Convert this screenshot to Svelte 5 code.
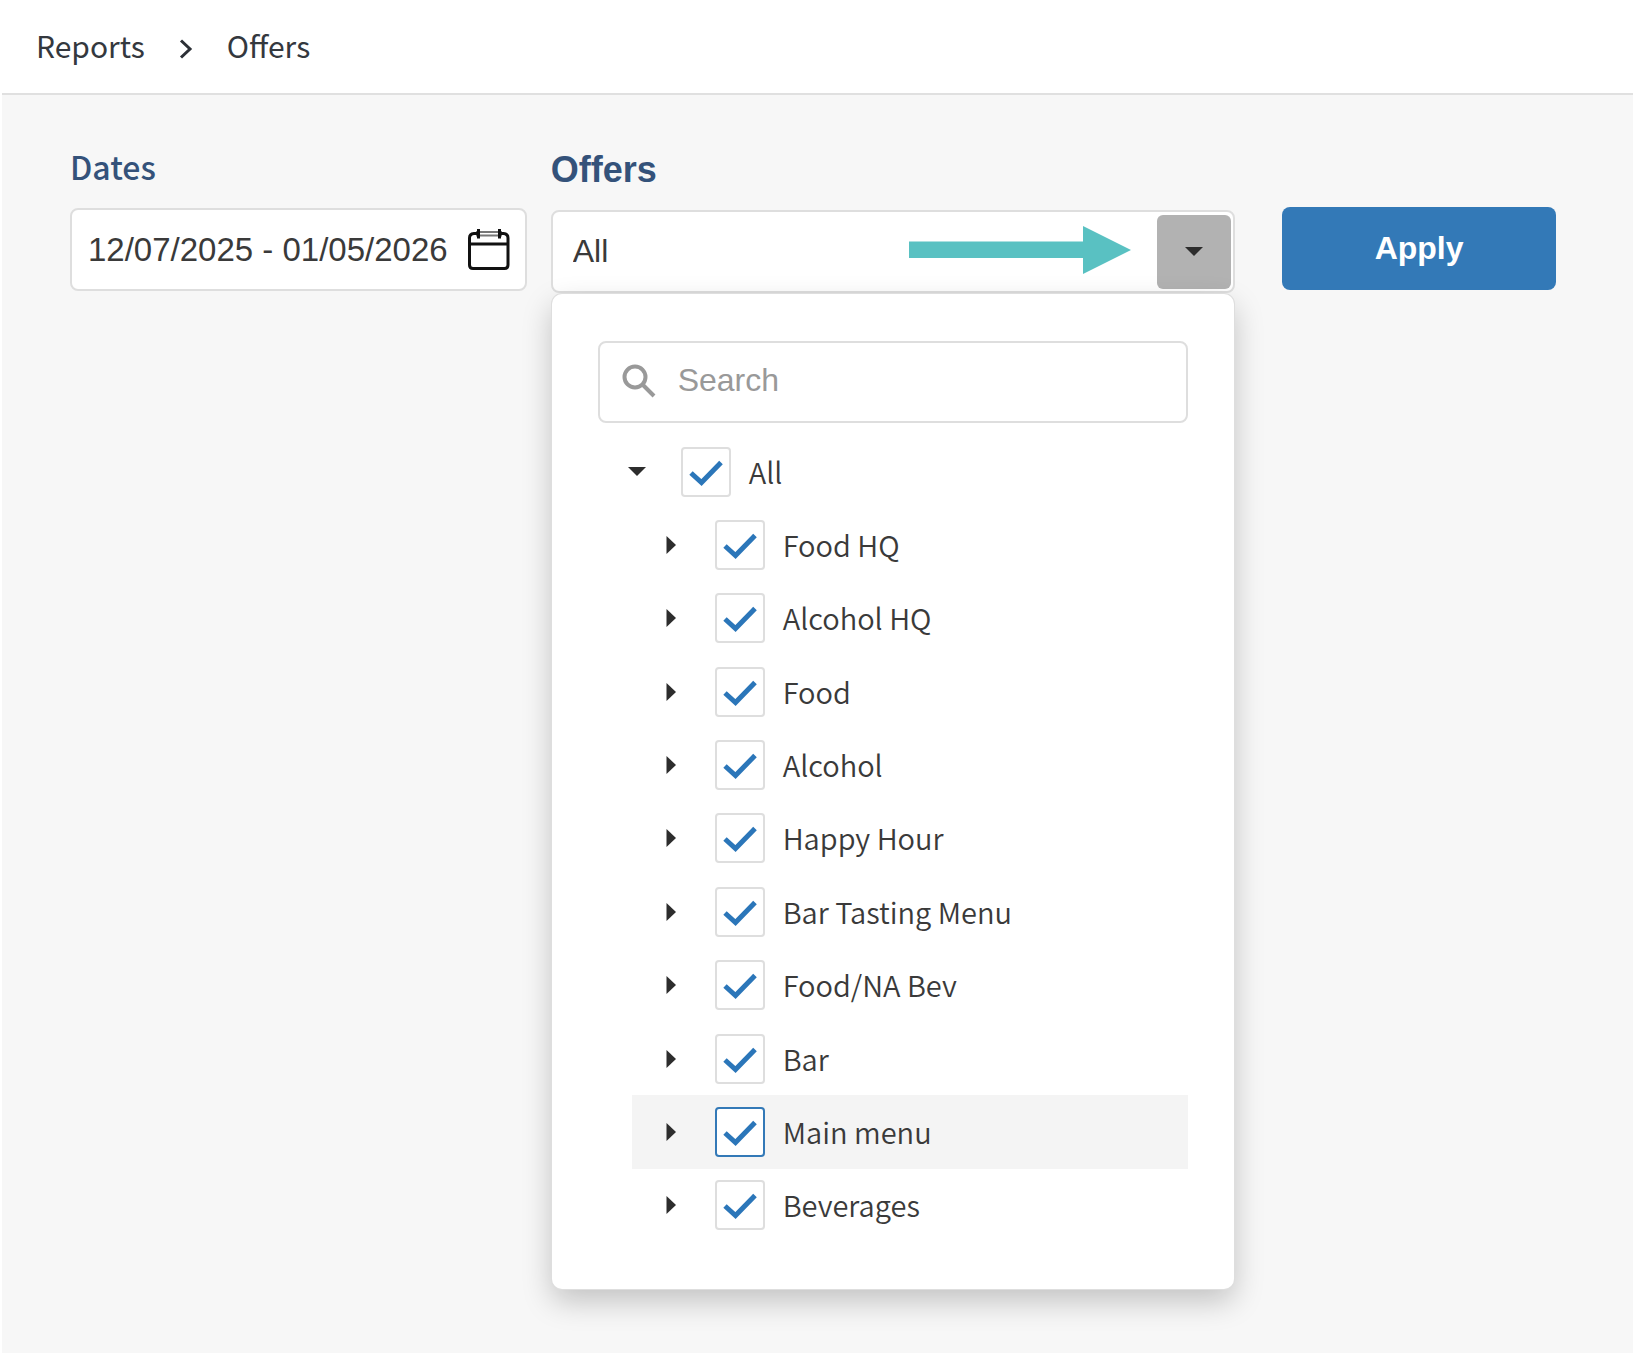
<script>
  const names = [
    'Food HQ',
    'Alcohol HQ',
    'Food',
    'Alcohol',
    'Happy Hour',
    'Bar Tasting Menu',
    'Food/NA Bev',
    'Bar',
    'Main menu',
    'Beverages',
  ];
  let items = $state([
    { name: 'All', root: true, checked: true, active: false },
    ...names.map((name) => ({ name, root: false, checked: true, active: name === 'Main menu' })),
  ]);
  let dates = $state('12/07/2025 - 01/05/2026');
  let selected = $state('All');
  let query = $state('');
</script>

<div class="page">
  <header>
    <nav aria-label="Breadcrumb">
      <a href="#reports">Reports</a>
      <svg class="chevron" viewBox="0 0 14 20" aria-hidden="true">
        <path d="M2 1.5 L11 10 L2 18.500" />
      </svg>
      <a href="#offers" aria-current="page">Offers</a>
    </nav>
  </header>

  <main>
    <form class="filters" onsubmit={(e) => e.preventDefault()}>
      <div class="col">
        <label class="title source" for="dates">Dates</label>
        <div class="field">
          <input id="dates" class="dates" type="text" bind:value={dates} />
          <button class="calendar" type="button" aria-label="Open calendar">
            <svg viewBox="0 0 42 42" aria-hidden="true">
              <path class="band" d="M8 3 H34 M8 6.500 H34" />
              <path d="M9 4.500 H6 Q1.500 5 1.500 9 V36 Q1.500 39.500 5 39.500 H36.500 Q40 39.500 40 36 V9 Q40 5 35.500 4.500 H33" />
              <path d="M1.500 15 H40" />
              <path d="M10.500 0 V9.500 M31.500 0 V9.500" />
            </svg>
          </button>
        </div>
      </div>

      <div class="col">
        <label class="title" for="offers">Offers</label>
        <div class="field select">
          <input id="offers" class="value" type="text" role="combobox" aria-expanded="true" aria-controls="offer-panel" readonly bind:value={selected} />
          <svg class="arrow" viewBox="0 0 222 48" aria-hidden="true">
            <path d="M0 15.500 H174 V0 L222 24 L174 48 V32 H0 Z" />
          </svg>
          <button class="toggle" type="button" aria-label="Toggle offers">
            <svg class="caret" viewBox="0 0 18 18" aria-hidden="true"><path d="M0 4 H18 L9 13 Z" /></svg>
          </button>
        </div>

        <div class="panel" id="offer-panel">
          <div class="search">
            <svg viewBox="0 0 34 34" aria-hidden="true">
              <circle cx="13" cy="13" r="10.500" />
              <path d="M20 20 L32 32" />
            </svg>
            <input type="text" placeholder="Search" aria-label="Search" bind:value={query} />
          </div>
          <ul>
            {#each items as item, i}
              <li class:child={!item.root} class:active={item.active}>
                <button class="expander" type="button" aria-label={`Expand ${item.name}`}>
                  <svg class="caret" viewBox="0 0 18 18" aria-hidden="true">
                    <path d={item.root ? 'M0 4 H18 L9 13 Z' : 'M4.500 0 L14 9 L4.500 18 Z'} />
                  </svg>
                </button>
                <span class="tick">
                  <input type="checkbox" id={`offer-${i}`} bind:checked={item.checked} />
                  <svg viewBox="0 0 50 50" aria-hidden="true"><path d="M10 26 L20.500 35.500 L40 15.500" /></svg>
                </span>
                <label for={`offer-${i}`}>{item.name}</label>
              </li>
            {/each}
          </ul>
        </div>
      </div>

      <button class="apply" type="submit">Apply</button>
    </form>
  </main>
</div>

<style>
  :global(body) {
    margin: 0;
    background: #fff;
  }
  * {
    box-sizing: border-box;
  }
  .page {
    display: flex;
    flex-direction: column;
    min-height: 100vh;
    padding: 0 3px 3px 2px;
    color: #3a3a3a;
    font-family: 'Liberation Sans', Arial, sans-serif;
    font-size: 32px;
  }
  svg {
    display: block;
    flex: none;
    fill: none;
  }
  input,
  button {
    font: inherit;
    color: inherit;
    margin: 0;
    padding: 0;
    border: 0;
    background: none;
    outline: 0;
  }
  input[type='text'] {
    flex: 1;
    min-width: 0;
    height: 100%;
  }
  button {
    cursor: pointer;
  }
  header {
    padding: 22px 34px 25px;
    border-bottom: 2px solid #e0e0e0;
  }
  nav {
    display: flex;
    align-items: center;
    font-family: 'Noto Sans CJK JP', sans-serif;
    font-size: 30px;
    line-height: 46px;
  }
  nav a {
    color: #34383e;
    text-decoration: none;
  }
  .chevron {
    width: 14px;
    height: 20px;
    margin: 8px 34px 0;
    stroke: #2c3036;
    stroke-width: 3;
  }
  main {
    flex: 1;
    padding: 50px 77px 48px 68px;
    background: #f7f7f7;
  }
  .filters {
    display: grid;
    grid-template-columns: 457fr 685fr 297fr;
    column-gap: 24px;
    align-items: start;
  }
  .col {
    min-width: 0;
  }
  .title {
    display: block;
    line-height: 50px;
    padding-bottom: 15px;
    font-size: 36px;
    font-weight: 700;
    color: #34527a;
  }
  .title.source {
    line-height: 42px;
    padding-bottom: 21px;
    font-family: 'Noto Sans CJK JP', sans-serif;
    font-size: 32px;
    font-weight: 500;
  }
  .field {
    display: flex;
    align-items: center;
    height: 83px;
    border: 2px solid #dedede;
    border-radius: 8px;
    background: #fff;
  }
  .dates {
    padding-left: 16px;
    font-size: 33px;
  }
  .calendar {
    margin-right: 15px;
  }
  .calendar svg {
    width: 42px;
    height: 42px;
    stroke: #111;
    stroke-width: 3;
  }
  .calendar .band {
    stroke: #777;
    stroke-width: 2;
  }
  .value {
    padding-left: 20px;
  }
  .arrow {
    width: 222px;
    height: 48px;
    margin: 0 26px 4px 0;
    fill: #59c1c2;
  }
  .toggle {
    display: grid;
    place-items: center;
    width: 74px;
    height: 74px;
    margin-right: 2px;
    border-radius: 6px;
    background: #b2b2b2;
  }
  .caret {
    width: 18px;
    height: 18px;
    fill: #2d2d2d;
  }
  .panel {
    position: relative;
    margin: 1px 1px 0;
    padding: 47px 46px;
    border-radius: 10px;
    background: #fff;
    box-shadow:
      0 0 0 1px #dedede,
      0 12px 30px rgba(0, 0, 0, 0.22);
  }
  .search {
    display: flex;
    align-items: center;
    gap: 22px;
    height: 82px;
    padding: 0 22px 3px;
    border: 2px solid #dedede;
    border-radius: 8px;
  }
  .search svg {
    width: 34px;
    height: 34px;
    stroke: #999;
    stroke-width: 4;
  }
  .search input::placeholder {
    color: #999;
    opacity: 1;
  }
  ul {
    display: grid;
    grid-auto-rows: 1fr;
    min-height: 807px;
    margin: 12px 0 0;
    padding: 0;
    list-style: none;
  }
  li {
    display: flex;
    align-items: center;
    padding-left: 30px;
    font-family: 'Noto Sans CJK JP', sans-serif;
    font-size: 29px;
    font-weight: 350;
    line-height: 44px;
  }
  li label {
    padding-bottom: 2px;
  }
  li.child {
    margin-left: 34px;
  }
  li.active {
    background: #f4f4f4;
  }
  .tick {
    display: grid;
    margin: 0 18px 0 35px;
  }
  .tick > * {
    grid-area: 1 / 1;
    width: 50px;
    height: 50px;
  }
  .tick input {
    appearance: none;
    border: 2px solid #dedede;
    border-radius: 4px;
    background: #fff;
  }
  .active .tick input {
    border-color: #3379b7;
  }
  .tick svg {
    z-index: 1;
    pointer-events: none;
    stroke: #2b76b9;
    stroke-width: 5;
  }
  .tick input:not(:checked) + svg {
    visibility: hidden;
  }
  .apply {
    height: 83px;
    margin: 62px 0 0 23px;
    border-radius: 8px;
    background: #3379b7;
    color: #fff;
    font-weight: 700;
  }
</style>
